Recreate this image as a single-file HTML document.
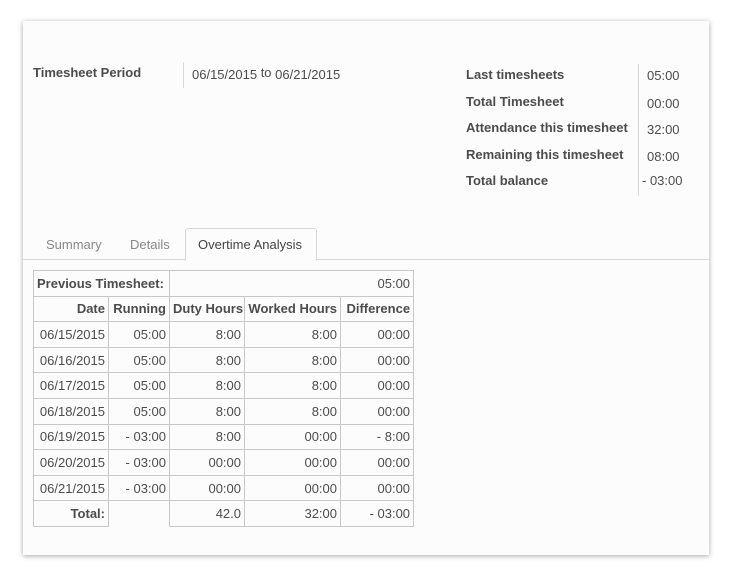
<!DOCTYPE html>
<html><head><style>
body{margin:0;width:731px;height:576px;background:#fff;font-family:"Liberation Sans",Arial,sans-serif;color:#4c4c4c;font-size:13px;position:relative;overflow:hidden}
.card{position:absolute;left:23px;top:21px;width:686px;height:534px;background:#fcfcfc;box-shadow:0 1px 5px rgba(0,0,0,.35)}
.a{position:absolute;white-space:nowrap}
.b{font-weight:bold}
.vl{position:absolute;width:1px;background:#d8d8d8}
table{position:absolute;left:33px;top:270px;border-collapse:collapse;font-size:13px;table-layout:fixed;width:380px}
td{border:1px solid #c8c8c8;padding:0 3px;height:24.6px;text-align:right;white-space:nowrap;overflow:hidden}
</style></head><body>
<div class="card"></div>
<div class="a b" style="left:33px;top:65px">Timesheet Period</div>
<div class="vl" style="left:183px;top:62px;height:26px"></div>
<div class="a" style="left:192px;top:67px">06/15/2015 <span style="position:relative;top:-2px">to</span> 06/21/2015</div>

<div class="a b" style="left:466px;top:67px">Last timesheets</div>
<div class="a b" style="left:466px;top:94px">Total Timesheet</div>
<div class="a b" style="left:466px;top:120px">Attendance this timesheet</div>
<div class="a b" style="left:466px;top:147px">Remaining this timesheet</div>
<div class="a b" style="left:466px;top:173px">Total balance</div>
<div class="vl" style="left:638px;top:64px;height:132px"></div>
<div class="a" style="left:647px;top:68px">05:00</div>
<div class="a" style="left:647px;top:96px">00:00</div>
<div class="a" style="left:647px;top:122px">32:00</div>
<div class="a" style="left:647px;top:149px">08:00</div>
<div class="a" style="left:642px;top:173px">- 03:00</div>

<div class="a" style="left:23px;top:259px;width:686px;height:1px;background:#d8d8d8"></div>
<div class="a" style="left:185px;top:228px;width:130px;height:32px;border:1px solid #d8d8d8;border-bottom:none;border-radius:3px 3px 0 0;background:#fcfcfc"></div>
<div class="a" style="left:46px;top:237px;color:#888">Summary</div>
<div class="a" style="left:130px;top:237px;color:#888">Details</div>
<div class="a" style="left:198px;top:237px;color:#444">Overtime Analysis</div>

<table>
<colgroup><col style="width:75px"><col style="width:61px"><col style="width:75px"><col style="width:96px"><col style="width:73px"></colgroup>
<tr><td colspan="2" class="b" style="text-align:left">Previous Timesheet:</td><td colspan="3">05:00</td></tr>
<tr class="b"><td>Date</td><td>Running</td><td>Duty Hours</td><td>Worked Hours</td><td>Difference</td></tr>
<tr><td>06/15/2015</td><td>05:00</td><td>8:00</td><td>8:00</td><td>00:00</td></tr>
<tr><td>06/16/2015</td><td>05:00</td><td>8:00</td><td>8:00</td><td>00:00</td></tr>
<tr><td>06/17/2015</td><td>05:00</td><td>8:00</td><td>8:00</td><td>00:00</td></tr>
<tr><td>06/18/2015</td><td>05:00</td><td>8:00</td><td>8:00</td><td>00:00</td></tr>
<tr><td>06/19/2015</td><td>- 03:00</td><td>8:00</td><td>00:00</td><td>- 8:00</td></tr>
<tr><td>06/20/2015</td><td>- 03:00</td><td>00:00</td><td>00:00</td><td>00:00</td></tr>
<tr><td>06/21/2015</td><td>- 03:00</td><td>00:00</td><td>00:00</td><td>00:00</td></tr>
<tr><td class="b">Total:</td><td style="border-bottom:none"></td><td>42.0</td><td>32:00</td><td>- 03:00</td></tr>
</table>
</body></html>
